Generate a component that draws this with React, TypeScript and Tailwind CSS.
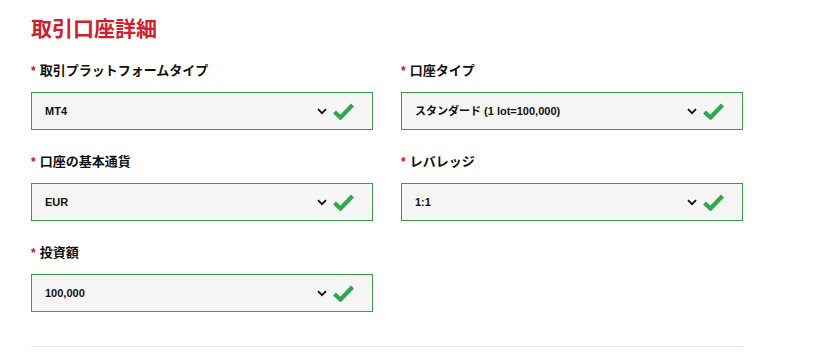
const fields = [
  { label: "取引プラットフォームタイプ", value: "MT4" },
  { label: "口座タイプ", value: "スタンダード (1 lot=100,000)" },
  { label: "口座の基本通貨", value: "EUR" },
  { label: "レバレッジ", value: "1:1" },
  { label: "投資額", value: "100,000" },
];

const Chevron = () => (
  <svg width="10" height="7" viewBox="0 0 10 7" className="shrink-0">
    <path d="M1 1.2 L5 5.2 L9 1.2" fill="none" stroke="#111" strokeWidth="1.8" />
  </svg>
);

const Check = () => (
  <svg width="21" height="17" viewBox="0 0 21 17" className="shrink-0">
    <path d="M1.5 9 L7.5 14.5 L19.5 2" fill="none" stroke="#2ea84a" strokeWidth="4.2" />
  </svg>
);

const Field = ({ label, value }: { label: string; value: string }) => (
  <div className="flex flex-col">
    <label className="flex items-center h-[18px] text-[13px] font-bold text-[#111]">
      <span className="text-[#c8102e] mr-[4px] text-[12px]">*</span>
      {label}
    </label>
    <div className="mt-[12px] h-[38px] w-[342px] border border-[#3c9a4c] bg-[#f5f5f5] flex items-center pl-[13px] pr-[18px]">
      <span className="flex-1 text-[11px] font-bold text-[#111]">{value}</span>
      <div className="flex items-center gap-[6px]">
        <Chevron />
        <Check />
      </div>
    </div>
  </div>
);

export default function App() {
  return (
    <div
      className="w-[817px] h-[360px] bg-white overflow-hidden px-[31px] pt-[15px]"
      style={{ fontFamily: '"Liberation Sans", Arial, "Noto Sans CJK JP", sans-serif' }}
    >
      <h1 className="text-[21px] leading-[28px] font-bold text-[#d0202e]">取引口座詳細</h1>
      <div className="mt-[19px] grid grid-cols-[342px_342px] gap-x-[28px] gap-y-[23px]">
        {fields.map((f) => (
          <Field key={f.label} label={f.label} value={f.value} />
        ))}
      </div>
      <div className="mt-[34px] w-[712px] border-t border-[#e8e8e8]" />
    </div>
  );
}
